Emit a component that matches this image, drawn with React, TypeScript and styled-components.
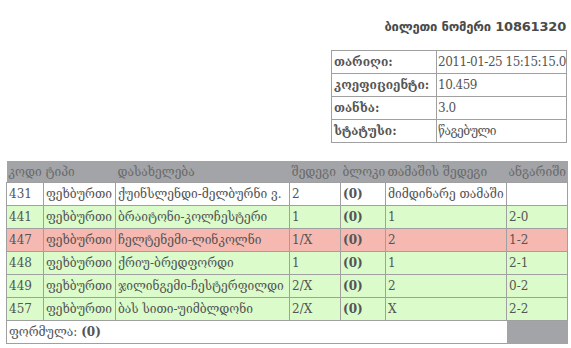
import styled, { createGlobalStyle } from "styled-components";

const GlobalStyle = createGlobalStyle`
  html, body {
    margin: 0;
    padding: 0;
    background: #ffffff;
  }
`;

const Page = styled.div`
  display: flex;
  flex-direction: column;
  width: 561px;
  padding: 0 4px 0 6px;
  color: #555555;
  font-family: "DejaVu Serif", serif;
  font-size: 12px;
`;

const TicketTitle = styled.h1`
  margin: 19px 1px 0 0;
  align-self: flex-end;
  font-family: "DejaVu Sans", sans-serif;
  font-size: 13px;
  font-weight: bold;
  color: #4a4a4a;
  line-height: 16px;
  letter-spacing: -0.2px;
`;

const InfoTable = styled.table`
  align-self: flex-end;
  margin-top: 15px;
  width: 236px;
  border-collapse: collapse;
  table-layout: fixed;
  border: 1px solid #a0a0a0;
`;

const InfoLabel = styled.th`
  width: 100px;
  height: 22px;
  padding: 0 2px;
  text-align: left;
  font-weight: bold;
  border: 1px solid #a0a0a0;
  white-space: nowrap;
`;

const InfoValue = styled.td`
  padding: 0 1px;
  border: 1px solid #a0a0a0;
  white-space: nowrap;
  overflow: hidden;
  letter-spacing: -0.5px;
`;

const Grid = styled.table`
  margin-top: 18px;
  width: 561px;
  border-collapse: collapse;
  table-layout: fixed;
`;

const HeadCell = styled.th`
  height: 21px;
  padding: 0 2px;
  text-align: left;
  font-weight: normal;
  background: #a2a4a7;
  color: #6a6a6a;
  white-space: nowrap;
`;

const Row = styled.tr<{ $tone: "plain" | "win" | "lose" }>`
  background: ${p =>
    p.$tone === "win" ? "#dbfcca" : p.$tone === "lose" ? "#f6b9b1" : "#ffffff"};
`;

const Cell = styled.td<{ $bold?: boolean }>`
  height: 22px;
  padding: 0 2px;
  border: 1px solid #a0a0a0;
  white-space: nowrap;
  overflow: hidden;
  font-weight: ${p => (p.$bold ? "bold" : "normal")};
`;

const FormulaCell = styled.td`
  height: 22px;
  padding: 0 2px;
  border: 1px solid #a0a0a0;
  border-right: none;
  background: #ffffff;
`;

const Filler = styled.td`
  background: #a2a4a7;
  border: none;
`;

interface IBet {
  code: string;
  type: string;
  name: string;
  outcome: string;
  result: string;
  score: string;
  tone: "plain" | "win" | "lose";
}

const bets: IBet[] = [
  { code: "431", type: "ფეხბურთი", name: "ქუინსლენდი-მელბურნი ვ.", outcome: "2", result: "მიმდინარე თამაში", score: "", tone: "plain" },
  { code: "441", type: "ფეხბურთი", name: "ბრაიტონი-კოლჩესტერი", outcome: "1", result: "1", score: "2-0", tone: "win" },
  { code: "447", type: "ფეხბურთი", name: "ჩელტენემი-ლინკოლნი", outcome: "1/X", result: "2", score: "1-2", tone: "lose" },
  { code: "448", type: "ფეხბურთი", name: "ქრიუ-ბრედფორდი", outcome: "1", result: "1", score: "2-1", tone: "win" },
  { code: "449", type: "ფეხბურთი", name: "ჯილინგემი-ჩესტერფილდი", outcome: "2/X", result: "2", score: "0-2", tone: "win" },
  { code: "457", type: "ფეხბურთი", name: "ბას სითი-უიმბლდონი", outcome: "2/X", result: "X", score: "2-2", tone: "win" },
];

const info: [string, string][] = [
  ["თარიღი:", "2011-01-25 15:15:15.0"],
  ["კოეფიციენტი:", "10.459"],
  ["თანხა:", "3.0"],
  ["სტატუსი:", "წაგებული"],
];

export default function App() {
  return (
    <>
      <GlobalStyle />
      <Page>
        <TicketTitle>ბილეთი ნომერი 10861320</TicketTitle>
        <InfoTable>
          <tbody>
            {info.map(([label, value]) => (
              <tr key={label}>
                <InfoLabel>{label}</InfoLabel>
                <InfoValue>{value}</InfoValue>
              </tr>
            ))}
          </tbody>
        </InfoTable>
        <Grid>
          <colgroup>
            <col style={{ width: 37 }} />
            <col style={{ width: 72 }} />
            <col style={{ width: 174 }} />
            <col style={{ width: 51 }} />
            <col style={{ width: 45 }} />
            <col style={{ width: 121 }} />
            <col style={{ width: 61 }} />
          </colgroup>
          <thead>
            <tr>
              <HeadCell>კოდი</HeadCell>
              <HeadCell>ტიპი</HeadCell>
              <HeadCell>დასახელება</HeadCell>
              <HeadCell>შედეგი</HeadCell>
              <HeadCell>ბლოკი</HeadCell>
              <HeadCell>თამაშის შედეგი</HeadCell>
              <HeadCell>ანგარიში</HeadCell>
            </tr>
          </thead>
          <tbody>
            {bets.map(bet => (
              <Row key={bet.code} $tone={bet.tone}>
                <Cell>{bet.code}</Cell>
                <Cell>{bet.type}</Cell>
                <Cell>{bet.name}</Cell>
                <Cell>{bet.outcome}</Cell>
                <Cell $bold>(0)</Cell>
                <Cell>{bet.result}</Cell>
                <Cell>{bet.score}</Cell>
              </Row>
            ))}
            <tr>
              <FormulaCell colSpan={6}>
                ფორმულა: <b>(0)</b>
              </FormulaCell>
              <Filler />
            </tr>
          </tbody>
        </Grid>
      </Page>
    </>
  );
}
